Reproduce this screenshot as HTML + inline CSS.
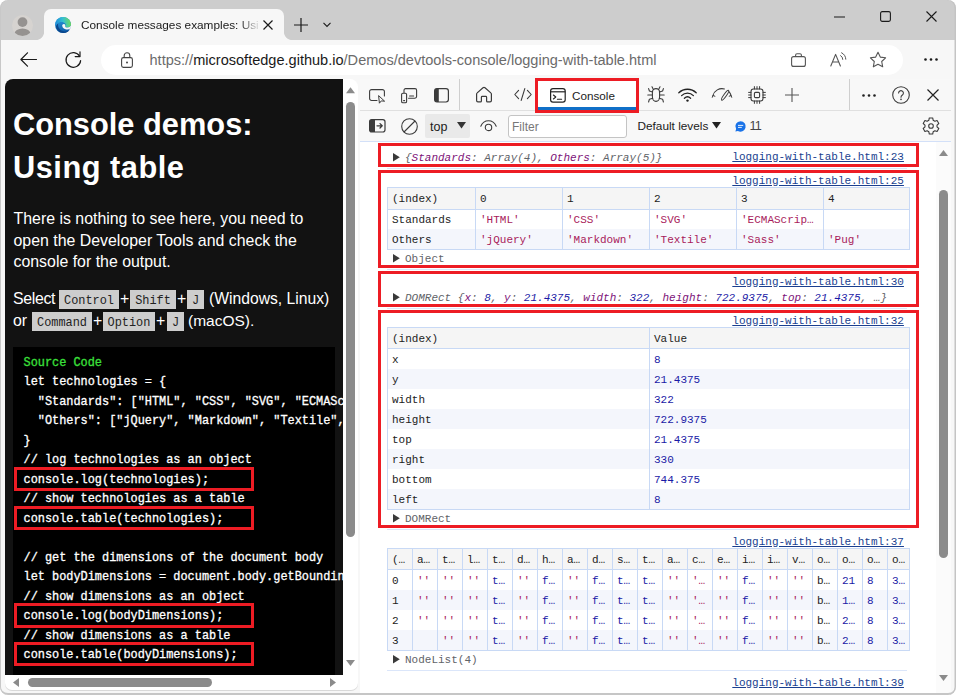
<!DOCTYPE html>
<html lang="en">
<head>
<meta charset="utf-8">
<title>Console messages examples: Using table</title>
<style>
*{box-sizing:border-box;margin:0;padding:0}
html,body{width:956px;height:695px;overflow:hidden;background:#fff}
body{position:relative;font-family:"Liberation Sans",sans-serif;color:#1b1b1b}
.abs{position:absolute}
.t{position:absolute;white-space:nowrap;line-height:1}
svg{position:absolute;overflow:visible}
#win{position:absolute;left:0;top:0;width:956px;height:695px;background:#cdcdcd;border-radius:8px;overflow:hidden}
#tab{left:44px;top:9px;width:240px;height:32px;background:#f7f7f7;border-radius:7px 7px 0 0}
.flare{position:absolute;top:32px;width:8px;height:8px}
#toolbar{left:0;top:40px;width:956px;height:655px;background:#f7f7f7}
#pill{left:101px;top:45px;width:802px;height:30px;background:#fff;border-radius:15px}
.mono{font-family:"Liberation Mono",monospace}
/* PAGE */
#page{left:5px;top:79px;width:338px;height:596px;background:#121212;border-radius:8px 0 0 0;overflow:hidden}
#vsb{left:343px;top:79px;width:15px;height:596px;background:#fff;border-radius:0 8px 0 0}
#hsb{left:5px;top:675px;width:353px;height:15px;background:#fff;border-radius:0 0 7px 7px;box-shadow:0 1px 0 #d9d9d9}
.thumb{position:absolute;background:#8b8b8b;border-radius:5px}
.pp{font-size:15.9px;color:#fff}
.kbd{position:absolute;height:19px;background:#cdcdcd;color:#222;font-family:"Liberation Mono",monospace;font-size:11.9px;line-height:23px;text-align:center;white-space:nowrap}
#code{left:8px;top:268px;width:322px;height:340px;background:#000;color:#fff;font-size:11.9px;line-height:19.47px;padding:7px 0 0 10.5px;overflow:visible}
#code div{white-space:pre;-webkit-text-stroke:0.3px currentColor}
.rb{position:absolute;border:3px solid #ed1c24}
/* DEVTOOLS */
#dt{left:360px;top:79px;width:591px;height:614px;background:#fff;overflow:visible}
.lnk{font-size:11px;color:#1a3f8f;text-decoration:underline}
.it{font-style:italic;font-size:11px}
#dt .mono{font-size:11px}
.g{color:#5f6368}.k{color:#7d1278}.n{color:#1a1aa6}.s{color:#a81b5b}
table.ct{position:absolute;border-collapse:collapse;table-layout:fixed;font-family:"Liberation Mono",monospace;font-size:11px;color:#222;border:1px solid #c8d9f5}
table.ct th,table.ct td{border-left:1px solid #c8d9f5;border-right:1px solid #c8d9f5;padding:2px 0 0 4px;text-align:left;font-weight:normal;white-space:nowrap;overflow:hidden;vertical-align:middle;line-height:14px}
table.ct tr.h th{background:#f5f5f5;border-bottom:1px solid #c8d9f5}
table.ct tr.z td{background:#f4f6fc}
table.ct.nl th,table.ct.nl td{padding-left:4px}
</style>
</head>
<body>
<div id="win">
<!-- TITLE BAR -->
<div id="tab" class="abs"></div>
<div id="toolbar" class="abs"></div>
<div class="flare" style="left:36px;background:radial-gradient(circle at 0 0,rgba(247,247,247,0) 7.6px,#f7f7f7 8.4px)"></div>
<div class="flare" style="left:284px;background:radial-gradient(circle at 100% 0,rgba(247,247,247,0) 7.6px,#f7f7f7 8.4px)"></div>
<div id="pill" class="abs"></div>
<!--CHROME_START-->
<!-- profile avatar -->
<svg style="left:12px;top:14.5px" width="21" height="21" viewBox="0 0 21 21"><defs><clipPath id="avc"><circle cx="10.5" cy="10.5" r="10.5"/></clipPath></defs><circle cx="10.5" cy="10.5" r="10.5" fill="#d6d3d0"/><g clip-path="url(#avc)" fill="#959290"><circle cx="10.5" cy="7.1" r="4.9"/><ellipse cx="10.5" cy="18.6" rx="8" ry="5.2"/></g></svg>
<!-- edge logo -->
<svg style="left:55px;top:17px" width="16" height="16" viewBox="0 0 16 16"><defs><linearGradient id="eg1" x1="0.2" y1="0" x2="0.7" y2="1"><stop offset="0" stop-color="#2b9fe0"/><stop offset="1" stop-color="#0c55a4"/></linearGradient><linearGradient id="eg2" x1="0" y1="0.5" x2="1" y2="0.4"><stop offset="0" stop-color="#1f8fd8"/><stop offset="0.5" stop-color="#35bfd0"/><stop offset="1" stop-color="#6fdc56"/></linearGradient></defs><circle cx="8" cy="8" r="8" fill="url(#eg1)"/><path d="M3.2 6.5 C2.4 10 5 14 9.5 14.4 C12 14.6 14 13.6 15 12.2 C14 14.6 11.4 16 8.4 16 C4.6 16 1.6 13.4 1 9.8 C1.2 8.4 2 7.2 3.2 6.5 Z" fill="#0b478c"/><path d="M0.6 5.6 C1.8 2.2 4.8 0 8 0 C12.4 0 16 3.4 16 7.6 C16 9.4 14.6 10.6 12.6 10.6 C11 10.6 10 10 10.2 9.2 C10.8 8.4 10.8 7.4 10.2 6.6 C9 5 6.4 4.6 4.2 5.4 C2.6 6 1.4 7.2 0.8 8.6 C0.4 7.6 0.4 6.6 0.6 5.6 Z" fill="url(#eg2)"/><path d="M10.2 9.2 C10 10 11 10.6 12.6 10.6 C14.2 10.6 15.4 9.8 15.95 8.6 C16.1 9.4 15.9 10.6 15.5 11.2 C14.6 12.2 12.8 12.7 11.2 12.5 C9.2 12.2 7.4 10.8 7.2 8.8 C7.1 7.6 8 6.8 9 6.9 C10 7 10.6 8.2 10.2 9.2 Z" fill="#f7f7f7"/></svg>
<div class="t" id="tabtitle" style="left:81px;top:16.5px;font-size:11.8px;line-height:17px;height:17px;color:#1a1a1a;width:178px;overflow:hidden;-webkit-mask-image:linear-gradient(90deg,#000 158px,transparent 180px);mask-image:linear-gradient(90deg,#000 158px,transparent 180px)">Console messages examples: Using table</div>
<!-- tab close -->
<svg style="left:263px;top:20px" width="10" height="10" viewBox="0 0 10 10"><path d="M0.5 0.5 L9.5 9.5 M9.5 0.5 L0.5 9.5" stroke="#1a1a1a" stroke-width="1.2" fill="none"/></svg>
<!-- new tab + -->
<svg style="left:294px;top:18px" width="14" height="14" viewBox="0 0 14 14"><path d="M7 0 V14 M0 7 H14" stroke="#1a1a1a" stroke-width="1.2" fill="none"/></svg>
<!-- chevron -->
<svg style="left:323px;top:22px" width="8" height="6" viewBox="0 0 8 6"><path d="M0.5 0.8 L4 4.4 L7.5 0.8" stroke="#1a1a1a" stroke-width="1.1" fill="none"/></svg>
<!-- window controls -->
<svg style="left:834px;top:16px" width="11" height="2" viewBox="0 0 11 2"><path d="M0 1 H11" stroke="#1a1a1a" stroke-width="1.1"/></svg>
<svg style="left:880px;top:11px" width="11" height="11" viewBox="0 0 11 11"><rect x="0.6" y="0.6" width="9.8" height="9.8" rx="1.6" fill="none" stroke="#1a1a1a" stroke-width="1.1"/></svg>
<svg style="left:926px;top:11px" width="11" height="11" viewBox="0 0 11 11"><path d="M0.5 0.5 L10.5 10.5 M10.5 0.5 L0.5 10.5" stroke="#1a1a1a" stroke-width="1.1" fill="none"/></svg>
<!-- back -->
<svg style="left:20.4px;top:52px" width="17" height="15" viewBox="0 0 17 15"><path d="M16.5 7.5 H1 M7.5 0.8 L0.9 7.5 L7.5 14.2" stroke="#1a1a1a" stroke-width="1.2" fill="none" stroke-linecap="round" stroke-linejoin="round"/></svg>
<!-- refresh -->
<svg style="left:65px;top:51px" width="17" height="17" viewBox="0 0 17 17"><path d="M14.6 5.2 A7.3 7.3 0 1 0 15.6 9.6" stroke="#1a1a1a" stroke-width="1.2" fill="none" stroke-linecap="round"/><path d="M15 0.8 V5.6 H10.2" stroke="#1a1a1a" stroke-width="1.2" fill="none" stroke-linecap="round" stroke-linejoin="round"/></svg>
<!-- lock -->
<svg style="left:121px;top:51.7px" width="12" height="16" viewBox="0 0 12 16"><rect x="0.6" y="5.6" width="10.8" height="9.8" rx="1.8" fill="none" stroke="#444" stroke-width="1.1"/><path d="M3.2 5.6 V3.6 A2.8 2.8 0 0 1 8.8 3.6 V5.6" fill="none" stroke="#444" stroke-width="1.1"/><circle cx="6" cy="10.5" r="1" fill="#444"/></svg>
<div class="t" id="url" style="left:149.5px;top:53px;font-size:14.55px;color:#6b6b6b"><span>https://</span><span style="color:#1a1a1a">microsoftedge.github.io</span><span>/Demos/devtools-console/logging-with-table.html</span></div>
<!-- briefcase -->
<svg style="left:791px;top:53px" width="15" height="14" viewBox="0 0 15 14"><rect x="0.6" y="3.6" width="13.8" height="9.8" rx="2" fill="none" stroke="#555" stroke-width="1.1"/><path d="M4.6 3.6 V2.2 A1.4 1.4 0 0 1 6 0.8 H9 A1.4 1.4 0 0 1 10.4 2.2 V3.6" fill="none" stroke="#555" stroke-width="1.1"/></svg>
<!-- read aloud A -->
<svg style="left:830px;top:52px" width="18" height="15" viewBox="0 0 18 15"><path d="M0.8 14 L5.6 2.4 L10.4 14 M2.6 10 H8.6" stroke="#555" stroke-width="1.1" fill="none" stroke-linejoin="round" stroke-linecap="round"/><path d="M10.6 3.6 A4.2 4.2 0 0 1 12.8 7.4" stroke="#555" stroke-width="1" fill="none" stroke-linecap="round"/><path d="M11.6 0.8 A7.4 7.4 0 0 1 15.8 7.2" stroke="#555" stroke-width="1" fill="none" stroke-linecap="round"/></svg>
<!-- star -->
<svg style="left:869px;top:51px" width="18" height="17" viewBox="0 0 18 17"><path d="M9 1.2 L11.3 6.1 L16.6 6.8 L12.7 10.5 L13.7 15.8 L9 13.2 L4.3 15.8 L5.3 10.5 L1.4 6.8 L6.7 6.1 Z" fill="none" stroke="#555" stroke-width="1.1" stroke-linejoin="round"/></svg>
<!-- menu dots -->
<svg style="left:924px;top:58px" width="14" height="3" viewBox="0 0 14 3"><circle cx="1.5" cy="1.5" r="1.3" fill="#1a1a1a"/><circle cx="7" cy="1.5" r="1.3" fill="#1a1a1a"/><circle cx="12.5" cy="1.5" r="1.3" fill="#1a1a1a"/></svg>
<!--CHROME_END-->
<!--PAGE_START-->
<div id="page" class="abs">
<div class="t" id="h1a" style="left:8px;top:31px;font-size:30.8px;font-weight:bold;color:#fff">Console demos:</div>
<div class="t" id="h1b" style="left:8px;top:74px;font-size:30.8px;letter-spacing:0.5px;font-weight:bold;color:#fff">Using table</div>
<div class="t pp" id="p1" style="left:8.5px;top:132px">There is nothing to see here, you need to</div>
<div class="t pp" id="p2" style="left:8.5px;top:153.5px">open the Developer Tools and check the</div>
<div class="t pp" id="p3" style="left:8.5px;top:175px">console for the output.</div>
<div class="t pp" id="s1" style="left:8px;top:212px;letter-spacing:-0.35px">Select</div>
<div class="kbd" style="left:54px;top:211px;width:60px">Control</div>
<div class="t pp" style="left:115px;top:212px">+</div>
<div class="kbd" style="left:125px;top:211px;width:46px">Shift</div>
<div class="t pp" style="left:172px;top:212px">+</div>
<div class="kbd" style="left:182px;top:211px;width:17px">J</div>
<div class="t pp" id="s2" style="left:204px;top:212px;font-size:15.7px">(Windows, Linux)</div>
<div class="t pp" style="left:8px;top:234px">or</div>
<div class="kbd" style="left:27px;top:233px;width:60px">Command</div>
<div class="t pp" style="left:88px;top:234px">+</div>
<div class="kbd" style="left:98px;top:233px;width:52px">Option</div>
<div class="t pp" style="left:151px;top:234px">+</div>
<div class="kbd" style="left:162px;top:233px;width:17px">J</div>
<div class="t pp" id="s3" style="left:183px;top:234px;font-size:15.5px">(macOS).</div>
<div id="code" class="abs mono"><div style="color:#3be03b">Source Code</div>
<div>let technologies = {</div>
<div>  "Standards": ["HTML", "CSS", "SVG", "ECMAScript"],</div>
<div>  "Others": ["jQuery", "Markdown", "Textile", "Sass", "Pug"]</div>
<div>}</div>
<div>// log technologies as an object</div>
<div>console.log(technologies);</div>
<div>// show technologies as a table</div>
<div>console.table(technologies);</div>
<div>&nbsp;</div>
<div>// get the dimensions of the document body</div>
<div>let bodyDimensions = document.body.getBoundingClientRect();</div>
<div>// show dimensions as an object</div>
<div>console.log(bodyDimensions);</div>
<div>// show dimensions as a table</div>
<div>console.table(bodyDimensions);</div>
</div>
<div class="rb" style="left:9px;top:388px;width:240px;height:24px"></div>
<div class="rb" style="left:9px;top:427px;width:240px;height:24px"></div>
<div class="rb" style="left:9px;top:524px;width:240px;height:25px"></div>
<div class="rb" style="left:9px;top:563px;width:240px;height:24px"></div>
</div>
<div id="vsb" class="abs">
<svg style="left:3px;top:8px" width="9" height="6.7" viewBox="0 0 9 6"><path d="M0 6 L4.5 0 L9 6 Z" fill="#8b8b8b"/></svg>
<div class="thumb" style="left:3px;top:23px;width:9px;height:435px"></div>
<svg style="left:3px;top:581px" width="9" height="6" viewBox="0 0 9 6"><path d="M0 0 L4.5 6 L9 0 Z" fill="#8b8b8b"/></svg>
</div>
<div id="hsb" class="abs">
<svg style="left:8px;top:3px" width="6" height="9" viewBox="0 0 6 9"><path d="M6 0 L0 4.5 L6 9 Z" fill="#8b8b8b"/></svg>
<div class="thumb" style="left:23px;top:3px;width:184px;height:9px"></div>
<svg style="left:325px;top:3px" width="6" height="9" viewBox="0 0 6 9"><path d="M0 0 L6 4.5 L0 9 Z" fill="#8b8b8b"/></svg>
</div>
<!--PAGE_END-->
<!--DT_START-->
<div id="dt" class="abs">
<div class="abs" style="left:0;top:0;width:591px;height:32px;background:#f8f8f8;border-bottom:1px solid #e0e0e0"></div>
<div class="abs" style="left:0;top:32px;width:591px;height:31px;background:#f8f8f8;border-bottom:1px solid #d3e0f8"></div>
<svg style="left:9px;top:10px" width="17" height="15" viewBox="0 0 17 15"><path d="M8 11.5 H2.6 A2 2 0 0 1 0.6 9.5 V2.6 A2 2 0 0 1 2.6 0.6 H13.4 A2 2 0 0 1 15.4 2.6 V7" fill="none" stroke="#3b3b3b" stroke-width="1.1" stroke-linecap="round"/><path d="M9.6 6.6 L10.4 14.2 L12.3 11.9 L15.6 12.2 Z" fill="none" stroke="#3b3b3b" stroke-width="1" stroke-linejoin="round"/></svg>
<svg style="left:41px;top:9px" width="17" height="16" viewBox="0 0 17 16"><path d="M3 4.6 V2.2 A1.6 1.6 0 0 1 4.6 0.6 H14 A1.6 1.6 0 0 1 15.6 2.2 V8.6 A1.6 1.6 0 0 1 14 10.2 H7.6" fill="none" stroke="#3b3b3b" stroke-width="1.1" stroke-linecap="round"/><rect x="0.6" y="5.2" width="5" height="9.6" rx="1.3" fill="none" stroke="#3b3b3b" stroke-width="1.1"/><path d="M2.6 12.6 H3.6 M8.6 8 H12.6" stroke="#3b3b3b" stroke-width="1.1" stroke-linecap="round"/></svg>
<svg style="left:74px;top:9px" width="15" height="15" viewBox="0 0 15 15"><rect x="0.6" y="0.6" width="13.8" height="13.4" rx="2.4" fill="none" stroke="#3b3b3b" stroke-width="1.2"/><path d="M0.6 3 A2.4 2.4 0 0 1 3 0.6 H4.8 V14 H3 A2.4 2.4 0 0 1 0.6 11.6 Z" fill="#3b3b3b"/></svg>
<div class="abs" style="left:99px;top:0;width:1px;height:31px;background:#cfcfcf"></div>
<svg style="left:115px;top:7px" width="18" height="17" viewBox="0 0 18 17"><path d="M1.6 8.2 Q1.6 7.4 2.2 6.9 L8.0 1.7 Q9 0.9 10 1.7 L15.8 6.9 Q16.4 7.4 16.4 8.2 V14.6 Q16.4 15.9 15.1 15.9 H12.6 Q11.6 15.9 11.6 14.9 V11.2 Q11.6 10.4 10.8 10.4 H7.2 Q6.4 10.4 6.4 11.2 V14.9 Q6.4 15.9 5.4 15.9 H2.9 Q1.6 15.9 1.6 14.6 Z" fill="none" stroke="#3b3b3b" stroke-width="1.2" stroke-linejoin="round"/></svg>
<svg style="left:154px;top:9px" width="18" height="13" viewBox="0 0 18 13"><path d="M4.6 2.4 L0.8 6.5 L4.6 10.6 M13.4 2.4 L17.2 6.5 L13.4 10.6 M10.8 0.6 L7.2 12.4" fill="none" stroke="#3b3b3b" stroke-width="1.1" stroke-linecap="round" stroke-linejoin="round"/></svg>
<div class="abs" style="left:175px;top:-1px;width:104px;height:35px;border:3px solid #ed1c24;background:#fff"></div>
<div class="abs" style="left:178px;top:28px;width:98px;height:3px;background:#1070c8"></div>
<svg style="left:190px;top:8.6px" width="16" height="15" viewBox="0 0 16 15"><rect x="0.6" y="0.6" width="14.6" height="13.6" rx="2.4" fill="none" stroke="#222" stroke-width="1.2"/><path d="M0.6 3.8 H15.2" stroke="#222" stroke-width="1.2"/><path d="M3.4 7 L5.8 9 L3.4 11 M7.4 11.2 H11.6" fill="none" stroke="#222" stroke-width="1.1" stroke-linecap="round" stroke-linejoin="round"/></svg>
<div class="t" id="contab" style="left:212px;top:10.5px;font-size:11.7px;color:#1b1b1b">Console</div>
<svg style="left:287px;top:7px" width="18" height="17" viewBox="0 0 18 17"><path d="M5.4 6.2 A3.6 3.6 0 0 1 12.6 6.2 V11 A3.6 4.4 0 0 1 5.4 11 Z" fill="none" stroke="#3b3b3b" stroke-width="1.1"/><path d="M6.4 3.4 L5 0.8 M11.6 3.4 L13 0.8 M5.4 9 H0.8 M12.6 9 H17.2 M5.6 6 L2.4 5 L1.6 2.6 M12.4 6 L15.6 5 L16.4 2.6 M5.8 12.2 L2.4 13.2 L1.6 16 M12.2 12.2 L15.6 13.2 L16.4 16" fill="none" stroke="#3b3b3b" stroke-width="1.1" stroke-linecap="round" stroke-linejoin="round"/></svg>
<svg style="left:318px;top:9.4px" width="19" height="14" viewBox="0 0 19 14"><path d="M0.8 4.8 A12.4 12.4 0 0 1 18.2 4.8 M3.6 7.6 A8.4 8.4 0 0 1 15.4 7.6 M6.4 10.2 A4.6 4.6 0 0 1 12.6 10.2" fill="none" stroke="#222" stroke-width="1.3" stroke-linecap="round"/><circle cx="9.5" cy="12.6" r="1.2" fill="#222"/></svg>
<svg style="left:352px;top:9px" width="20" height="14" viewBox="0 0 20 14"><path d="M0.92 7.57 A9.4 9.4 0 0 1 12.43 0.92 M16.99 3.71 A9.4 9.4 0 0 1 19.08 7.57" fill="none" stroke="#3b3b3b" stroke-width="1.1" stroke-linecap="round"/><path d="M0.3 9.3 L0.92 7.5 L2.9 8.2 M17.2 8.2 L19.1 7.5 L19.7 9.3" fill="none" stroke="#3b3b3b" stroke-width="1" stroke-linecap="round" stroke-linejoin="round"/><ellipse cx="13.1" cy="7.3" rx="1.3" ry="6" transform="rotate(35.5 13.1 7.3)" fill="none" stroke="#3b3b3b" stroke-width="1"/></svg>
<svg style="left:388px;top:7px" width="18" height="18" viewBox="0 0 18 18"><rect x="3" y="3" width="12" height="12" rx="2.4" fill="none" stroke="#3b3b3b" stroke-width="1.1"/><rect x="6.4" y="6.4" width="5.2" height="5.2" rx="1.2" fill="none" stroke="#3b3b3b" stroke-width="1.1"/><path d="M6.4 0.6 V3 M9 0.6 V3 M11.6 0.6 V3 M6.4 15 V17.4 M9 15 V17.4 M11.6 15 V17.4 M0.6 6.4 H3 M0.6 9 H3 M0.6 11.6 H3 M15 6.4 H17.4 M15 9 H17.4 M15 11.6 H17.4" stroke="#3b3b3b" stroke-width="1" stroke-linecap="round"/></svg>
<svg style="left:425px;top:9.4px" width="14" height="14" viewBox="0 0 14 14"><path d="M7 0 V14 M0 7 H14" stroke="#555" stroke-width="1.1"/></svg>
<div class="abs" style="left:489px;top:0;width:1px;height:31px;background:#cfcfcf"></div>
<svg style="left:502px;top:14.6px" width="14" height="3" viewBox="0 0 14 3"><circle cx="1.5" cy="1.5" r="1.3" fill="#222"/><circle cx="7" cy="1.5" r="1.3" fill="#222"/><circle cx="12.5" cy="1.5" r="1.3" fill="#222"/></svg>
<svg style="left:532px;top:7px" width="18" height="18" viewBox="0 0 18 18"><circle cx="9" cy="9" r="8.3" fill="none" stroke="#3b3b3b" stroke-width="1.1"/><path d="M6.6 7 A2.4 2.4 0 1 1 10.4 9 C9.4 9.7 9 10.2 9 11.2" fill="none" stroke="#3b3b3b" stroke-width="1.1" stroke-linecap="round"/><circle cx="9" cy="13.4" r="0.8" fill="#3b3b3b"/></svg>
<svg style="left:567px;top:10px" width="12" height="12" viewBox="0 0 12 12"><path d="M0.5 0.5 L11.5 11.5 M11.5 0.5 L0.5 11.5" stroke="#222" stroke-width="1.2" fill="none"/></svg>
<svg style="left:9px;top:40px" width="17" height="14" viewBox="0 0 17 14"><rect x="0.6" y="0.6" width="15.4" height="12.4" rx="2.2" fill="none" stroke="#3b3b3b" stroke-width="1.2"/><path d="M0.6 2.8 A2.2 2.2 0 0 1 2.8 0.6 H6 V13 H2.8 A2.2 2.2 0 0 1 0.6 10.8 Z" fill="#3b3b3b"/><path d="M8 6.8 H13 M11 4.6 L13.2 6.8 L11 9" fill="none" stroke="#3b3b3b" stroke-width="1.3" stroke-linecap="round" stroke-linejoin="round"/></svg>
<svg style="left:40.5px;top:38.5px" width="17" height="17" viewBox="0 0 17 17"><circle cx="8.5" cy="8.5" r="7.8" fill="none" stroke="#3b3b3b" stroke-width="1.1"/><path d="M3 14 L14 3" stroke="#3b3b3b" stroke-width="1.1"/></svg>
<div class="abs" style="left:65px;top:35px;width:45px;height:24px;background:#e9e9e9;border-radius:2px"></div>
<div class="t" id="toptxt" style="left:70px;top:41.5px;font-size:12.5px;color:#1b1b1b">top</div>
<svg style="left:97px;top:43px" width="9" height="7" viewBox="0 0 9 7"><path d="M0 0 H9 L4.5 6.6 Z" fill="#333"/></svg>
<svg style="left:120px;top:41px" width="17" height="12" viewBox="0 0 17 12"><path d="M0.8 6.2 C2.4 2.6 5 0.8 8.5 0.8 C12 0.8 14.6 2.6 16.2 6.2" fill="none" stroke="#3b3b3b" stroke-width="1.1" stroke-linecap="round"/><circle cx="8.5" cy="7.4" r="3.2" fill="none" stroke="#3b3b3b" stroke-width="1.1"/></svg>
<div class="abs" style="left:147.5px;top:35.5px;width:119.5px;height:23px;background:#fff;border:1px solid #c4c4c4;border-radius:3px"></div>
<div class="t" style="left:152px;top:41.5px;font-size:12px;color:#777">Filter</div>
<div class="t" id="deflev" style="left:277.5px;top:41.6px;font-size:11.8px;color:#1b1b1b">Default levels</div>
<svg style="left:352px;top:43.3px" width="9" height="7" viewBox="0 0 9 7"><path d="M0 0 H9 L4.5 6.4 Z" fill="#222"/></svg>
<svg style="left:374.5px;top:42px" width="11" height="11" viewBox="0 0 11 11"><path d="M5.6 0.2 A5.2 5.2 0 1 1 2.9 9.9 L0.4 10.6 L1.1 8.1 A5.2 5.2 0 0 1 5.6 0.2 Z" fill="#1a73e8"/><path d="M3.4 4.4 H7.8 M3.4 6.4 H6.4" stroke="#fff" stroke-width="0.9" stroke-linecap="round"/></svg>
<div class="t" style="left:389.5px;top:41px;font-size:12.6px;letter-spacing:-0.9px;color:#444">11</div>
<svg style="left:562px;top:38px" width="18" height="18" viewBox="0 0 18 18"><path d="M6.81 3.31 L7.30 0.98 L10.70 0.98 L11.19 3.31 L12.84 4.26 L15.09 3.51 L16.80 6.47 L15.02 8.05 L15.02 9.95 L16.80 11.53 L15.09 14.49 L12.84 13.74 L11.19 14.69 L10.70 17.02 L7.30 17.02 L6.81 14.69 L5.16 13.74 L2.91 14.49 L1.20 11.53 L2.98 9.95 L2.98 8.05 L1.20 6.47 L2.91 3.51 L5.16 4.26 Z" fill="none" stroke="#3b3b3b" stroke-width="1.1" stroke-linejoin="round"/><circle cx="9" cy="9" r="2.3" fill="none" stroke="#3b3b3b" stroke-width="1.1"/></svg>
<div class="t mono lnk" style="left:372.3px;top:72.5px">logging-with-table.html:23</div>
<svg style="left:32.8px;top:73.8px" width="7" height="8.4" viewBox="0 0 7 8.4"><path d="M0 0 L6.8 4.2 L0 8.4 Z" fill="#3a3a3a"/></svg>
<div class="t mono it" style="left:45px;top:73.5px"><span class="g">{</span><span class="k">Standards</span><span class="g">: Array(4), </span><span class="k">Others</span><span class="g">: Array(5)}</span></div>
<div class="abs" style="left:27px;top:89px;width:520px;height:1px;background:#dbe6fa"></div>
<div class="t mono lnk" style="left:372.3px;top:96.5px">logging-with-table.html:25</div>
<table class="ct " style="left:27px;top:108px;width:522px"><colgroup><col style="width:88px"><col style="width:87px"><col style="width:87px"><col style="width:87px"><col style="width:87px"><col style="width:86px"></colgroup><tr class="h" style="height:21.5px"><th>(index)</th><th>0</th><th>1</th><th>2</th><th>3</th><th>4</th></tr><tr class="" style="height:20.1px"><td>Standards</td><td><span class="s">'HTML'</span></td><td><span class="s">'CSS'</span></td><td><span class="s">'SVG'</span></td><td><span class="s">'ECMAScrip…</span></td><td></td></tr><tr class="z" style="height:20.1px"><td>Others</td><td><span class="s">'jQuery'</span></td><td><span class="s">'Markdown'</span></td><td><span class="s">'Textile'</span></td><td><span class="s">'Sass'</span></td><td><span class="s">'Pug'</span></td></tr></table>
<svg style="left:32.8px;top:175.3px" width="7" height="8.4" viewBox="0 0 7 8.4"><path d="M0 0 L6.8 4.2 L0 8.4 Z" fill="#3a3a3a"/></svg>
<div class="t mono" style="left:45px;top:175px;color:#5f6368">Object</div>
<div class="abs" style="left:27px;top:190px;width:520px;height:1px;background:#dbe6fa"></div>
<div class="t mono lnk" style="left:372.3px;top:197.5px">logging-with-table.html:30</div>
<svg style="left:32.8px;top:213.8px" width="7" height="8.4" viewBox="0 0 7 8.4"><path d="M0 0 L6.8 4.2 L0 8.4 Z" fill="#3a3a3a"/></svg>
<div class="t mono it" style="left:45px;top:213.5px"><span class="g">DOMRect {</span><span class="k">x</span><span class="g">: </span><span class="n">8</span><span class="g">, </span><span class="k">y</span><span class="g">: </span><span class="n">21.4375</span><span class="g">, </span><span class="k">width</span><span class="g">: </span><span class="n">322</span><span class="g">, </span><span class="k">height</span><span class="g">: </span><span class="n">722.9375</span><span class="g">, </span><span class="k">top</span><span class="g">: </span><span class="n">21.4375</span><span class="g">, </span><span class="g">…}</span></div>
<div class="abs" style="left:27px;top:229px;width:520px;height:1px;background:#dbe6fa"></div>
<div class="t mono lnk" style="left:372.3px;top:236.5px">logging-with-table.html:32</div>
<table class="ct " style="left:27px;top:248px;width:522px"><colgroup><col style="width:262px"><col style="width:260px"></colgroup><tr class="h" style="height:21px"><th>(index)</th><th>Value</th></tr><tr class="" style="height:20.1px"><td>x</td><td><span class="n">8</span></td></tr><tr class="z" style="height:20.1px"><td>y</td><td><span class="n">21.4375</span></td></tr><tr class="" style="height:20.1px"><td>width</td><td><span class="n">322</span></td></tr><tr class="z" style="height:20.1px"><td>height</td><td><span class="n">722.9375</span></td></tr><tr class="" style="height:20.1px"><td>top</td><td><span class="n">21.4375</span></td></tr><tr class="z" style="height:20.1px"><td>right</td><td><span class="n">330</span></td></tr><tr class="" style="height:20.1px"><td>bottom</td><td><span class="n">744.375</span></td></tr><tr class="z" style="height:20.1px"><td>left</td><td><span class="n">8</span></td></tr></table>
<svg style="left:32.8px;top:435.3px" width="7" height="8.4" viewBox="0 0 7 8.4"><path d="M0 0 L6.8 4.2 L0 8.4 Z" fill="#3a3a3a"/></svg>
<div class="t mono" style="left:45px;top:435px;color:#5f6368">DOMRect</div>
<div class="abs" style="left:27px;top:450px;width:520px;height:1px;background:#dbe6fa"></div>
<div class="t mono lnk" style="left:372.3px;top:457.5px">logging-with-table.html:37</div>
<table class="ct nl" style="left:27px;top:469px;width:522px"><colgroup><col style="width:25px"><col style="width:25px"><col style="width:25px"><col style="width:25px"><col style="width:25px"><col style="width:25px"><col style="width:25px"><col style="width:25px"><col style="width:25px"><col style="width:25px"><col style="width:25px"><col style="width:25px"><col style="width:25px"><col style="width:25px"><col style="width:25px"><col style="width:25px"><col style="width:25px"><col style="width:25px"><col style="width:25px"><col style="width:25px"><col style="width:22px"></colgroup><tr class="h" style="height:21.3px"><th>(…</th><th>a…</th><th>t…</th><th>l…</th><th>t…</th><th>d…</th><th>h…</th><th>a…</th><th>d…</th><th>s…</th><th>t…</th><th>a…</th><th>c…</th><th>e…</th><th>i…</th><th>i…</th><th>v…</th><th>o…</th><th>o…</th><th>o…</th><th>o…</th></tr><tr class="" style="height:20.2px"><td>0</td><td><span class="s">''</span></td><td><span class="s">''</span></td><td><span class="s">''</span></td><td><span class="n">t…</span></td><td><span class="s">''</span></td><td><span class="n">f…</span></td><td><span class="s">''</span></td><td><span class="n">f…</span></td><td><span class="n">t…</span></td><td><span class="n">t…</span></td><td><span class="s">''</span></td><td><span class="s">'…</span></td><td><span class="s">''</span></td><td><span class="n">f…</span></td><td><span class="s">''</span></td><td><span class="s">''</span></td><td>b…</td><td><span class="n">21</span></td><td><span class="n">8</span></td><td><span class="n">3…</span></td></tr><tr class="z" style="height:20.2px"><td>1</td><td><span class="s">''</span></td><td><span class="s">''</span></td><td><span class="s">''</span></td><td><span class="n">t…</span></td><td><span class="s">''</span></td><td><span class="n">f…</span></td><td><span class="s">''</span></td><td><span class="n">f…</span></td><td><span class="n">t…</span></td><td><span class="n">t…</span></td><td><span class="s">''</span></td><td><span class="s">'…</span></td><td><span class="s">''</span></td><td><span class="n">f…</span></td><td><span class="s">''</span></td><td><span class="s">''</span></td><td>b…</td><td><span class="n">1…</span></td><td><span class="n">8</span></td><td><span class="n">3…</span></td></tr><tr class="" style="height:20.2px"><td>2</td><td><span class="s">''</span></td><td><span class="s">''</span></td><td><span class="s">''</span></td><td><span class="n">t…</span></td><td><span class="s">''</span></td><td><span class="n">f…</span></td><td><span class="s">''</span></td><td><span class="n">f…</span></td><td><span class="n">t…</span></td><td><span class="n">t…</span></td><td><span class="s">''</span></td><td><span class="s">'…</span></td><td><span class="s">''</span></td><td><span class="n">f…</span></td><td><span class="s">''</span></td><td><span class="s">''</span></td><td>b…</td><td><span class="n">2…</span></td><td><span class="n">8</span></td><td><span class="n">3…</span></td></tr><tr class="z" style="height:20.2px"><td>3</td><td></td><td><span class="s">''</span></td><td><span class="s">''</span></td><td><span class="n">t…</span></td><td><span class="s">''</span></td><td><span class="n">f…</span></td><td><span class="s">''</span></td><td><span class="n">f…</span></td><td><span class="n">t…</span></td><td><span class="n">t…</span></td><td><span class="s">''</span></td><td><span class="s">'…</span></td><td><span class="s">''</span></td><td><span class="n">f…</span></td><td><span class="s">''</span></td><td><span class="s">''</span></td><td>b…</td><td><span class="n">2…</span></td><td><span class="n">8</span></td><td><span class="n">3…</span></td></tr></table>
<svg style="left:32.8px;top:576.3px" width="7" height="8.4" viewBox="0 0 7 8.4"><path d="M0 0 L6.8 4.2 L0 8.4 Z" fill="#3a3a3a"/></svg>
<div class="t mono" style="left:45px;top:576px;color:#5f6368">NodeList(4)</div>
<div class="abs" style="left:27px;top:591px;width:520px;height:1px;background:#dbe6fa"></div>
<div class="t mono lnk" style="left:372.3px;top:598.5px">logging-with-table.html:39</div>
<div class="rb" style="left:18px;top:64px;width:541px;height:24px"></div>
<div class="rb" style="left:18px;top:91px;width:541px;height:98px"></div>
<div class="rb" style="left:18px;top:192px;width:541px;height:36px"></div>
<div class="rb" style="left:18px;top:231px;width:541px;height:218px"></div>
<div class="abs" style="left:576px;top:63px;width:15px;height:551px;background:#fbfbfb"></div>
<svg style="left:579px;top:71px" width="9" height="6" viewBox="0 0 9 6"><path d="M0 6 L4.5 0 L9 6 Z" fill="#8b8b8b"/></svg>
<div class="thumb" style="left:579px;top:111px;width:9px;height:368px"></div>
<svg style="left:579px;top:596px" width="9" height="6" viewBox="0 0 9 6"><path d="M0 0 L4.5 6 L9 0 Z" fill="#8b8b8b"/></svg>
</div>
<!--DT_END-->
<div class="abs" style="left:0;top:0;width:956px;height:695px;border-radius:8px;box-shadow:inset 1px 0 #c8c8c8,inset -1.5px 0 #c4c4c4,inset 0 -2px #c6c6c6"></div>
</div>
</body>
</html>
